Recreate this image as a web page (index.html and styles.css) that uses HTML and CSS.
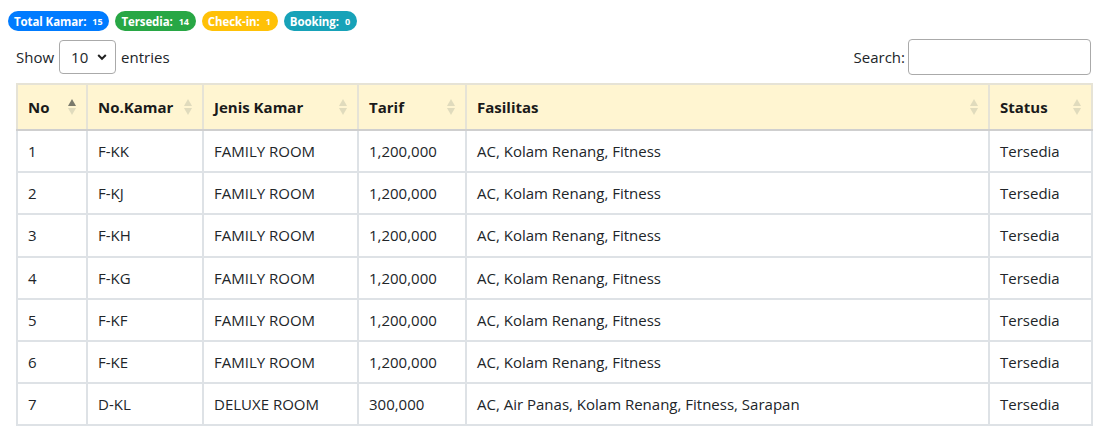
FILE: index.html
```html
<!DOCTYPE html>
<html>
<head>
<meta charset="utf-8">
<link rel="stylesheet" href="styles.css">
</head>
<body>
<div class="badges">
  <span class="badge b-blue">Total Kamar: <span class="count">15</span></span>
  <span class="badge b-green">Tersedia: <span class="count">14</span></span>
  <span class="badge b-yellow">Check-in: <span class="count">1</span></span>
  <span class="badge b-teal">Booking: <span class="count">0</span></span>
</div>
<div class="wrap">
  <div class="controls">
    <label class="length">Show
      <span class="select">10
        <svg width="10" height="8" viewBox="0 0 10 8"><path d="M1.2 2 L5 5.8 L8.8 2" fill="none" stroke="#222" stroke-width="2"/></svg>
      </span>
      entries</label>
    <label class="search">Search: <span class="input"></span></label>
  </div>
  <table class="grid">
    <colgroup>
      <col class="c1"><col class="c2"><col class="c3"><col class="c4"><col class="c5"><col class="c6">
    </colgroup>
    <thead>
      <tr>
        <th>No<span class="sort asc"><i class="up"></i><i class="dn"></i></span></th>
        <th>No.Kamar<span class="sort"><i class="up"></i><i class="dn"></i></span></th>
        <th>Jenis Kamar<span class="sort"><i class="up"></i><i class="dn"></i></span></th>
        <th>Tarif<span class="sort"><i class="up"></i><i class="dn"></i></span></th>
        <th>Fasilitas<span class="sort"><i class="up"></i><i class="dn"></i></span></th>
        <th>Status<span class="sort"><i class="up"></i><i class="dn"></i></span></th>
      </tr>
    </thead>
    <tbody>
      <tr><td>1</td><td>F-KK</td><td>FAMILY ROOM</td><td>1,200,000</td><td>AC, Kolam Renang, Fitness</td><td>Tersedia</td></tr>
      <tr><td>2</td><td>F-KJ</td><td>FAMILY ROOM</td><td>1,200,000</td><td>AC, Kolam Renang, Fitness</td><td>Tersedia</td></tr>
      <tr><td>3</td><td>F-KH</td><td>FAMILY ROOM</td><td>1,200,000</td><td>AC, Kolam Renang, Fitness</td><td>Tersedia</td></tr>
      <tr><td>4</td><td>F-KG</td><td>FAMILY ROOM</td><td>1,200,000</td><td>AC, Kolam Renang, Fitness</td><td>Tersedia</td></tr>
      <tr><td>5</td><td>F-KF</td><td>FAMILY ROOM</td><td>1,200,000</td><td>AC, Kolam Renang, Fitness</td><td>Tersedia</td></tr>
      <tr><td>6</td><td>F-KE</td><td>FAMILY ROOM</td><td>1,200,000</td><td>AC, Kolam Renang, Fitness</td><td>Tersedia</td></tr>
      <tr><td>7</td><td>D-KL</td><td>DELUXE ROOM</td><td>300,000</td><td>AC, Air Panas, Kolam Renang, Fitness, Sarapan</td><td>Tersedia</td></tr>
    </tbody>
  </table>
</div>
</body>
</html>
```

FILE: styles.css
```css
html, body {
  margin: 0;
  padding: 0;
  background: #fff;
}
body {
  padding: 8px;
  font-family: "Open Sans", "Noto Sans", sans-serif;
  font-size: 15px;
  color: #212529;
  overflow: hidden;
}
.badges {
  display: flex;
  gap: 6px;
  padding-top: 3px;
  height: 20px;
}
.badge {
  display: inline-flex;
  align-items: center;
  height: 20px;
  padding: 0 7px 0 6px;
  border-radius: 10px;
  color: #fff;
  font-size: 11.5px;
  font-weight: 700;
  letter-spacing: -0.1px;
  white-space: nowrap;
}
.badge .count {
  font-size: 9px;
  margin-left: 6px;
}
.b-blue { background: #007bff; }
.b-green { background: #28a745; }
.b-yellow { background: #ffc107; }
.b-teal { background: #17a2b8; }

.wrap {
  padding: 0 11px 0 8px;
}
.controls {
  display: flex;
  justify-content: space-between;
  align-items: center;
  margin-top: 8px;
  height: 36px;
}
.length, .search {
  display: flex;
  align-items: center;
}
.select {
  display: inline-flex;
  align-items: center;
  justify-content: space-between;
  box-sizing: border-box;
  width: 57px;
  height: 34px;
  margin: 0 5px 0 5px;
  padding: 0 8px 0 11px;
  border: 1px solid #aaa;
  border-radius: 4px;
  font-size: 15px;
}
.input {
  display: inline-block;
  box-sizing: border-box;
  width: 183px;
  height: 36px;
  margin-left: 3px;
  border: 1px solid #aaa;
  border-radius: 4px;
}
.grid {
  margin-top: 8px;
  width: 1075px;
  border-collapse: collapse;
  table-layout: fixed;
}
.c1 { width: 70px; }
.c2 { width: 116px; }
.c3 { width: 155px; }
.c4 { width: 108px; }
.c5 { width: 523px; }
.c6 { width: 103px; }
.grid th, .grid td {
  border: 2px solid #dee2e6;
  text-align: left;
  padding: 0 10px;
  white-space: nowrap;
  overflow: hidden;
}
.grid thead th {
  position: relative;
  background: #fff5d1;
  height: 44px;
  font-weight: 700;
  color: #1a1a1a;
  border-color: #e6e3d6;
  border-bottom: 2px solid #cfcfcf;
}
.grid td {
  height: 40.2px;
}
.sort {
  position: absolute;
  right: 9px;
  top: 50%;
  margin-top: -8px;
  width: 9px;
  height: 16px;
  display: flex;
  flex-direction: column;
  justify-content: space-between;
}
.sort i {
  display: block;
  width: 0;
  height: 0;
  border-left: 4.5px solid transparent;
  border-right: 4.5px solid transparent;
}
.sort .up { border-bottom: 7.5px solid #e0dbbd; }
.sort .dn { border-top: 7.5px solid #e0dbbd; }
.sort.asc .up { border-bottom-color: #7a7a6c; }
```
